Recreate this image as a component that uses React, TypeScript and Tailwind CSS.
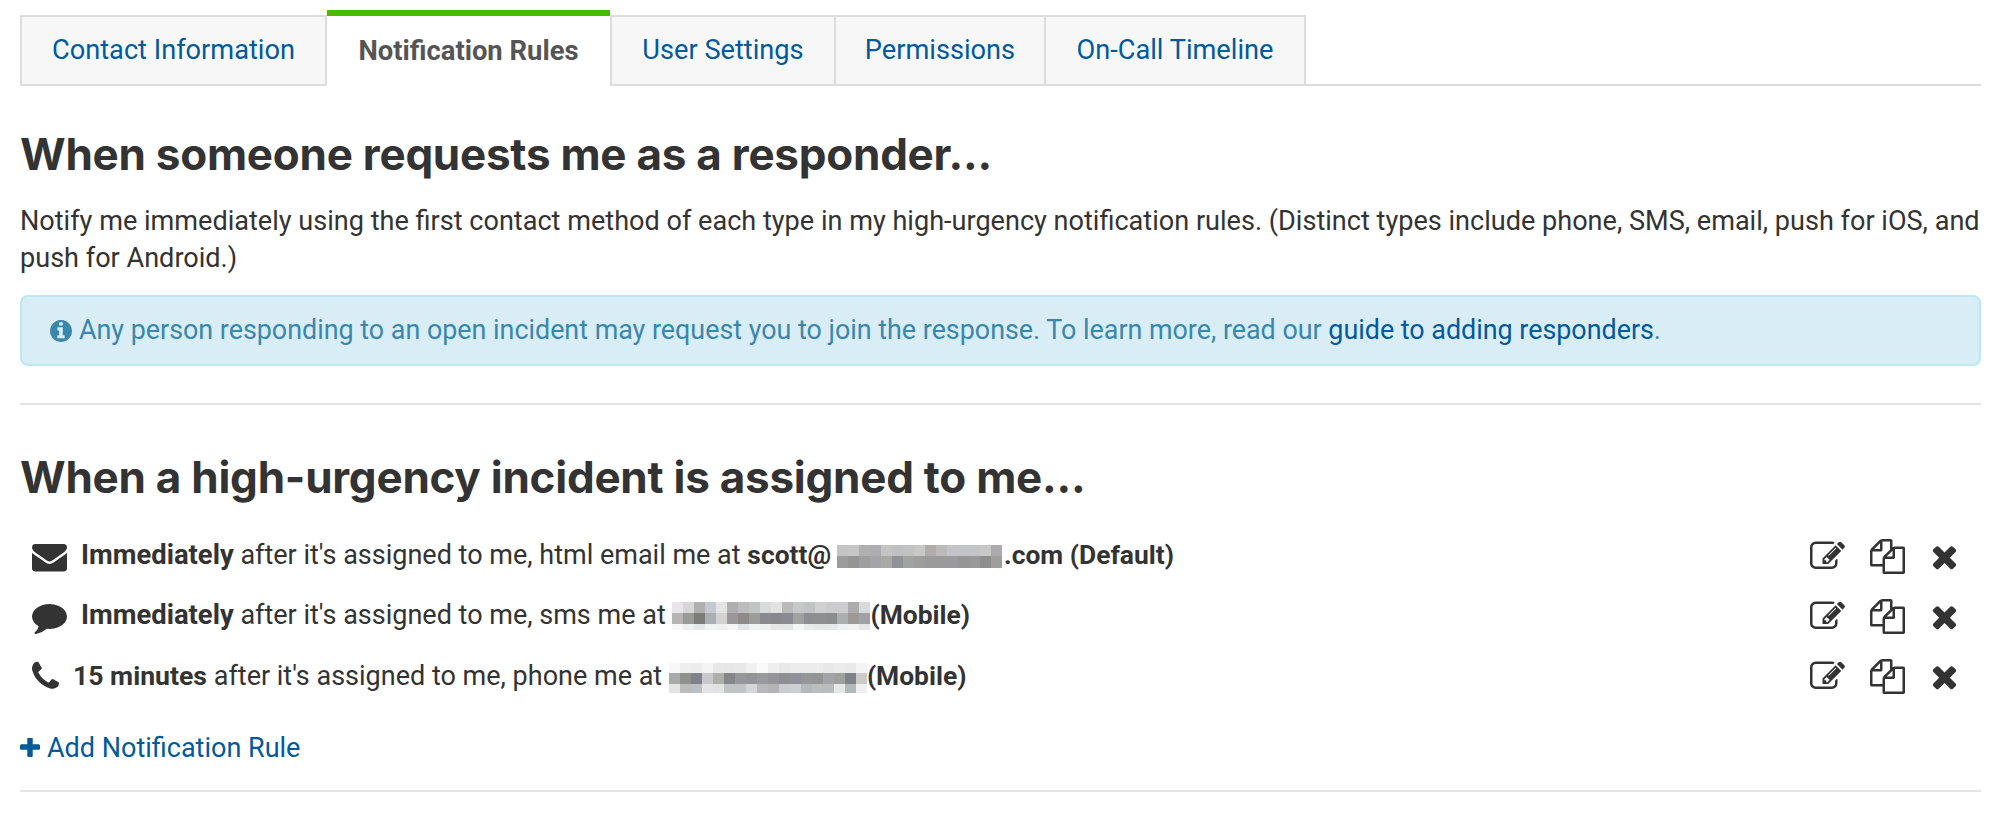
import type { ReactNode } from 'react'

// FontAwesome 4 glyphs, 1792 grid
const ICONS = {
  envelope: 'M1792 710v794q0 66-47 113t-113 47h-1472q-66 0-113-47t-47-113v-794q44 49 101 87 362 246 497 345 57 42 92.5 65.5t94.5 48 110 24.5h2q51 0 110-24.5t94.5-48 92.5-65.5q170-123 498-345 57-39 100-87zm0-294q0 79-49 151t-122 123q-376 261-468 325-10 7-42.5 30.5t-54 38-52 32.5-57.5 27-50 9h-2q-23 0-50-9t-57.5-27-52-32.5-54-38-42.5-30.5q-91-64-262-182.5t-205-142.5q-62-42-117-115.5t-55-136.5q0-78 41.5-130t118.5-52h1472q65 0 112.5 47t47.5 113z',
  comment: 'M1792 896q0 174-120 321.5t-326 233-450 85.5q-70 0-145-8-198 175-460 242-49 14-114 22-17 2-30.5-9t-17.5-29v-1q-3-4-.5-12t2-10 4.5-9.5l6-9 7-8.5 8-9q7-8 31-34.5t34.5-38 31-39.5 32.5-51 27-59 26-76q-157-89-247.5-220t-90.5-281q0-130 71-248.5t191-204.5 286-136.5 348-50.5q244 0 450 85.5t326 233 120 321.5z',
  phone: 'M1600 1240q0 27-10 70.5t-21 68.5q-21 50-122 106-94 51-186 51-27 0-53-3.5t-57.5-12.5-47-14.5-55.5-20.5-49-18q-98-35-175-83-127-79-264-216t-216-264q-48-77-83-175-3-9-18-49t-20.5-55.5-14.5-47-12.5-57.5-3.5-53q0-92 51-186 56-101 106-122 25-11 68.5-21t70.5-10q14 0 21 3 18 6 53 76 11 19 30 54t35 63.5 31 53.5q3 4 17.5 25t21.5 35.5 7 28.5q0 20-28.5 50t-62 55-62 53-28.5 46q0 9 5 22.5t8.5 20.5 14 24 11.5 19q76 137 174 235t235 174q2 1 19 11.5t24 14 20.5 8.5 22.5 5q18 0 46-28.5t53-62 55-62 50-28.5q14 0 28.5 7t35.5 21.5 25 17.5q25 15 53.5 31t63.5 35 54 30q70 35 76 53 3 7 3 21z',
  info: 'M1152 1376v-160q0-14-9-23t-23-9h-96v-512q0-14-9-23t-23-9h-320q-14 0-23 9t-9 23v160q0 14 9 23t23 9h96v320h-96q-14 0-23 9t-9 23v160q0 14 9 23t23 9h448q14 0 23-9t9-23zm-128-896v-160q0-14-9-23t-23-9h-192q-14 0-23 9t-9 23v160q0 14 9 23t23 9h192q14 0 23-9t9-23zm640 416q0 209-103 385.5t-279.5 279.5-385.5 103-385.5-103-279.5-279.5-103-385.5 103-385.5 279.5-279.5 385.5-103 385.5 103 279.5 279.5 103 385.5z',
  plus: 'M1600 736v192q0 40-28 68t-68 28h-416v416q0 40-28 68t-68 28h-192q-40 0-68-28t-28-68v-416h-416q-40 0-68-28t-28-68v-192q0-40 28-68t68-28h416v-416q0-40 28-68t68-28h192q40 0 68 28t28 68v416h416q40 0 68 28t28 68z',
  edit: 'M888 1184l116-116-152-152-116 116v56h96v96h56zm440-720q-16-16-33 1l-350 350q-17 17-1 33t33-1l350-350q17-17 1-33zm80 594v190q0 119-84.5 203.5t-203.5 84.5h-832q-119 0-203.5-84.5t-84.5-203.5v-832q0-119 84.5-203.5t203.5-84.5h832q63 0 117 25 15 7 18 23 3 17-9 29l-49 49q-14 14-32 8-23-6-45-6h-832q-66 0-113 47t-47 113v832q0 66 47 113t113 47h832q66 0 113-47t47-113v-126q0-13 9-22l64-64q15-15 35-7t20 29zm-96-738l288 288-672 672h-288v-288zm444 132l-92 92-288-288 92-92q28-28 68-28t68 28l152 152q28 28 28 68t-28 68z',
  files: 'M1696 384q40 0 68 28t28 68v1216q0 40-28 68t-68 28h-960q-40 0-68-28t-28-68v-288h-544q-40 0-68-28t-28-68v-672q0-40 20-88t48-76l408-408q28-28 76-48t88-20h416q40 0 68 28t28 68v328q68-40 128-40h416zm-544 213l-299 299h299v-299zm-640-384l-299 299h299v-299zm196 647l316-316v-416h-384v416q0 40-28 68t-68 28h-416v640h512v-256q0-40 20-88t48-76zm956 804v-1152h-384v416q0 40-28 68t-68 28h-416v640h896z',
  times: 'M1490 1322q0 40-28 68l-136 136q-28 28-68 28t-68-28l-294-294-294 294q-28 28-68 28t-68-28l-136-136q-28-28-28-68t28-68l294-294-294-294q-28-28-28-68t28-68l136-136q28-28 68-28t68 28l294 294 294-294q28-28 68-28t68 28l136 136q28 28 28 68t-28 68l-294 294 294 294q28 28 28 68z',
}

const Icon = ({ d, viewBox = '0 0 1792 1792', className }: { d: string; viewBox?: string; className: string }) => (
  <svg viewBox={viewBox} className={className} fill="currentColor" aria-hidden="true">
    <path d={d} />
  </svg>
)

// Pixelated blocks over the redacted contact details
const MOSAIC_EMAIL = [
  { h: 11, cells: ['c4c4c4', 'c6c6c6', 'b0b0b0', 'aeaeb2', 'c4c4c4', 'bfc0c4', 'c2c2c4', 'c8c8c6', 'b0acac', 'bcbaba', 'c4c4c8', 'c4c4c8', 'c2c4c8', 'c8c8c6', 'acaaac'] },
  { h: 12, cells: ['9c9c9c', '959595', '9e9ea0', 'a4a4a8', 'a8a8a4', '929296', 'a0a2a4', '9e9e9c', '9a9a9a', '9a9a9a', '9a9a9c', '959595', '989898', '8e8e8e', '9e9e9c'] },
]
const MOSAIC_SMS = [
  { h: 11, cells: ['e8e6e8', 'd8d6d8', 'b0b0b0', 'c4c8d0', 'e4e4e2', 'b0aeb0', 'bcbcbc', 'c2c4c4', 'd8dadc', 'e2e2e2', 'bababa', 'c6c8cc', 'c2c4c4', 'd0d0d0', 'ccccce', 'ccccce', 'acacac', 'd8dadc'] },
  { h: 11, cells: ['b8b4b4', '9a9a96', '7c7c78', 'a8b0b4', 'd4d2d0', '9a9699', '8e8a8a', '9c9c98', '8a8a8e', '88888c', '8a8a90', 'a0a2a0', '8c8e90', '8e9090', '8a8c90', 'aeaeae', '9c9a96', 'a0a2a6'] },
  { h: 6, cells: ['f8f8f8', 'eef0f0', 'e4e8e8', 'f2f4f4', 'f0f0f0', 'f6f6f6', 'e2e6e6', 'f0f2f2', 'eef0f0', 'e6e6e6', 'e4e6e6', 'f6f6f6', 'eaecec', 'e6e8e8', 'e8e8e8', 'eef0f4', 'f2f2f0', 'e8e8ea'] },
]
const MOSAIC_PHONE = [
  { h: 10, cells: ['f8f8f8', 'eeeeee', 'ececec', 'f4f4f4', 'e8e8e8', 'e6e6e6', 'e8e8e8', 'f0f0f0', 'fafafa', 'eeeeee', 'e8e8e8', 'ececec', 'ececec', 'ececec', 'e8e8e8', 'ececec', 'e8eaea', 'f4f4f4'] },
  { h: 11, cells: ['a8aaa8', '8e908c', '80828a', 'c8c8cc', 'aeaeaa', '86868a', '96969a', '929498', '9a9a9e', '949498', '8e8e94', '90909a', '969698', '929496', 'a4a4a8', 'a0a09e', '80828a', 'cacaca'] },
  { h: 9, cells: ['e4e4e4', 'bcbcbc', 'bcc0c4', 'e4e4e6', 'e2e2e2', 'c2c4c4', 'c0c4c4', 'd4d6da', 'b8b8ba', 'b4b4b6', 'ccccd0', 'ccd0d2', 'b4b8b8', 'bcbebe', 'b8bcbc', 'e6e8e8', 'b4b8ba', 'f0f0f0'] },
]

const Mosaic = ({ rows, className }: { rows: { h: number; cells: string[] }[]; className: string }) => {
  const cols = rows[0].cells.length
  const height = rows.reduce((sum, r) => sum + r.h, 0)
  let y = 0
  return (
    <svg width={cols * 11} height={height} viewBox={`0 0 ${cols * 11} ${height}`} className={className} aria-hidden="true">
      {rows.map((row, i) => {
        const top = y
        y += row.h
        return row.cells.map((c, j) => <rect key={`${i}-${j}`} x={j * 11} y={top} width={11} height={row.h} fill={`#${c}`} />)
      })}
    </svg>
  )
}

const tabs = ['Contact Information', 'Notification Rules', 'User Settings', 'Permissions', 'On-Call Timeline']
const tabWidths = ['w-[307px]', 'w-[283px]', 'w-[226px]', 'w-[210px]', 'w-[260px]']

const Rule = ({ icon, children }: { icon: ReactNode; children: ReactNode }) => (
  <div className="flex h-[60px] items-center pl-3 pr-[19px]">
    {icon}
    <div className="ml-[14px] flex-1 whitespace-nowrap">{children}</div>
    <div className="flex items-center text-[#333]">
      <Icon d={ICONS.edit} className="h-[35px] w-[35px]" />
      <Icon d={ICONS.files} className="ml-[25px] h-[35px] w-[35px]" />
      <Icon d={ICONS.times} className="ml-[22px] h-[35px] w-[35px]" />
    </div>
  </div>
)

export default function App() {
  return (
    <div className="min-h-[822px] bg-white pl-5 pr-[11px] pt-[10px] font-['Roboto',sans-serif] text-[27px] text-[#333]">
      {/* Tabs */}
      <div className="flex h-[76px] border-b-2 border-[#ddd] text-[27.2px]">
        {tabs.map((tab, i) => (
          i === 1 ? (
            <div
              key={tab}
              className={`${tabWidths[i]} -mb-[2px] flex h-[77px] items-center justify-center border-t-[6px] border-[#47ba04] bg-white text-[27.4px] font-bold text-[#555]`}
            >
              {tab}
            </div>
          ) : (
            <a
              key={tab}
              className={`${tabWidths[i]} mt-[5px] flex items-center justify-center border-2 border-b-0 border-[#ddd] bg-[#f7f7f7] text-[#005a9c] ${i > 2 ? 'border-l-0' : ''}`}
            >
              {tab}
            </a>
          )
        ))}
      </div>

      <h2 className="mt-[38px] font-['Inter',sans-serif] text-[44px] font-bold leading-[60px] tracking-[-0.25px]">When someone requests me as a responder...</h2>
      <p className="mt-[19px] text-[27.08px] leading-[37px]">
        Notify me immediately using the first contact method of each type in my high-urgency notification rules. (Distinct types include phone, SMS, email, push for iOS, and push for Android.)
      </p>

      <div className="mt-[18px] flex h-[71px] items-center rounded-lg border-2 border-[#bce8f1] bg-[#d9edf7] pl-[28px] text-[26.87px] text-[#3a87ad]">
        <Icon d={ICONS.info} viewBox="128 128 1536 1536" className="mr-[7px] h-[22px] w-[22px]" />
        <span>
          Any person responding to an open incident may request you to join the response. To learn more, read our{' '}
          <a className="text-[#005a9c]">guide to adding responders</a>.
        </span>
      </div>

      <hr className="mt-[37px] border-t-2 border-[#e5e5e5]" />

      <h2 className="mt-[42px] font-['Inter',sans-serif] text-[44px] font-bold leading-[60px] tracking-[-0.25px]">When a high-urgency incident is assigned to me...</h2>

      <div className="mt-[19px]">
        <Rule icon={<Icon d={ICONS.envelope} className="h-[35px] w-[35px]" />}>
          <b className="text-[27.4px] font-bold">Immediately</b> after it's assigned to me, html email me at <b className="text-[26.4px] font-bold">scott@</b>
          <Mosaic rows={MOSAIC_EMAIL} className="ml-[6px] mr-[2px] inline-block align-[-4px]" />
          <b className="text-[26.4px] font-bold">.com (Default)</b>
        </Rule>
        <Rule icon={<Icon d={ICONS.comment} className="h-[35px] w-[35px]" />}>
          <b className="text-[27.4px] font-bold">Immediately</b> after it's assigned to me, sms me at{' '}
          <Mosaic rows={MOSAIC_SMS} className="inline-block align-[-6px]" />
          <b className="text-[26.4px] font-bold">(Mobile)</b>
        </Rule>
        <Rule icon={<Icon d={ICONS.phone} viewBox="192 0 1408 1792" className="h-[35px] w-[27px]" />}>
          <b className="text-[26.6px] font-bold">15 minutes</b> after it's assigned to me, phone me at{' '}
          <Mosaic rows={MOSAIC_PHONE} className="inline-block align-[-8px]" />
          <b className="text-[26.4px] font-bold">(Mobile)</b>
        </Rule>
      </div>

      <a className="mt-[25px] flex items-center leading-[34px] text-[#005a9c]">
        <Icon d={ICONS.plus} viewBox="192 192 1408 1408" className="mr-[7px] h-5 w-5" />
        Add Notification Rule
      </a>

      <hr className="mt-[25px] border-t-2 border-[#e5e5e5]" />
    </div>
  )
}
